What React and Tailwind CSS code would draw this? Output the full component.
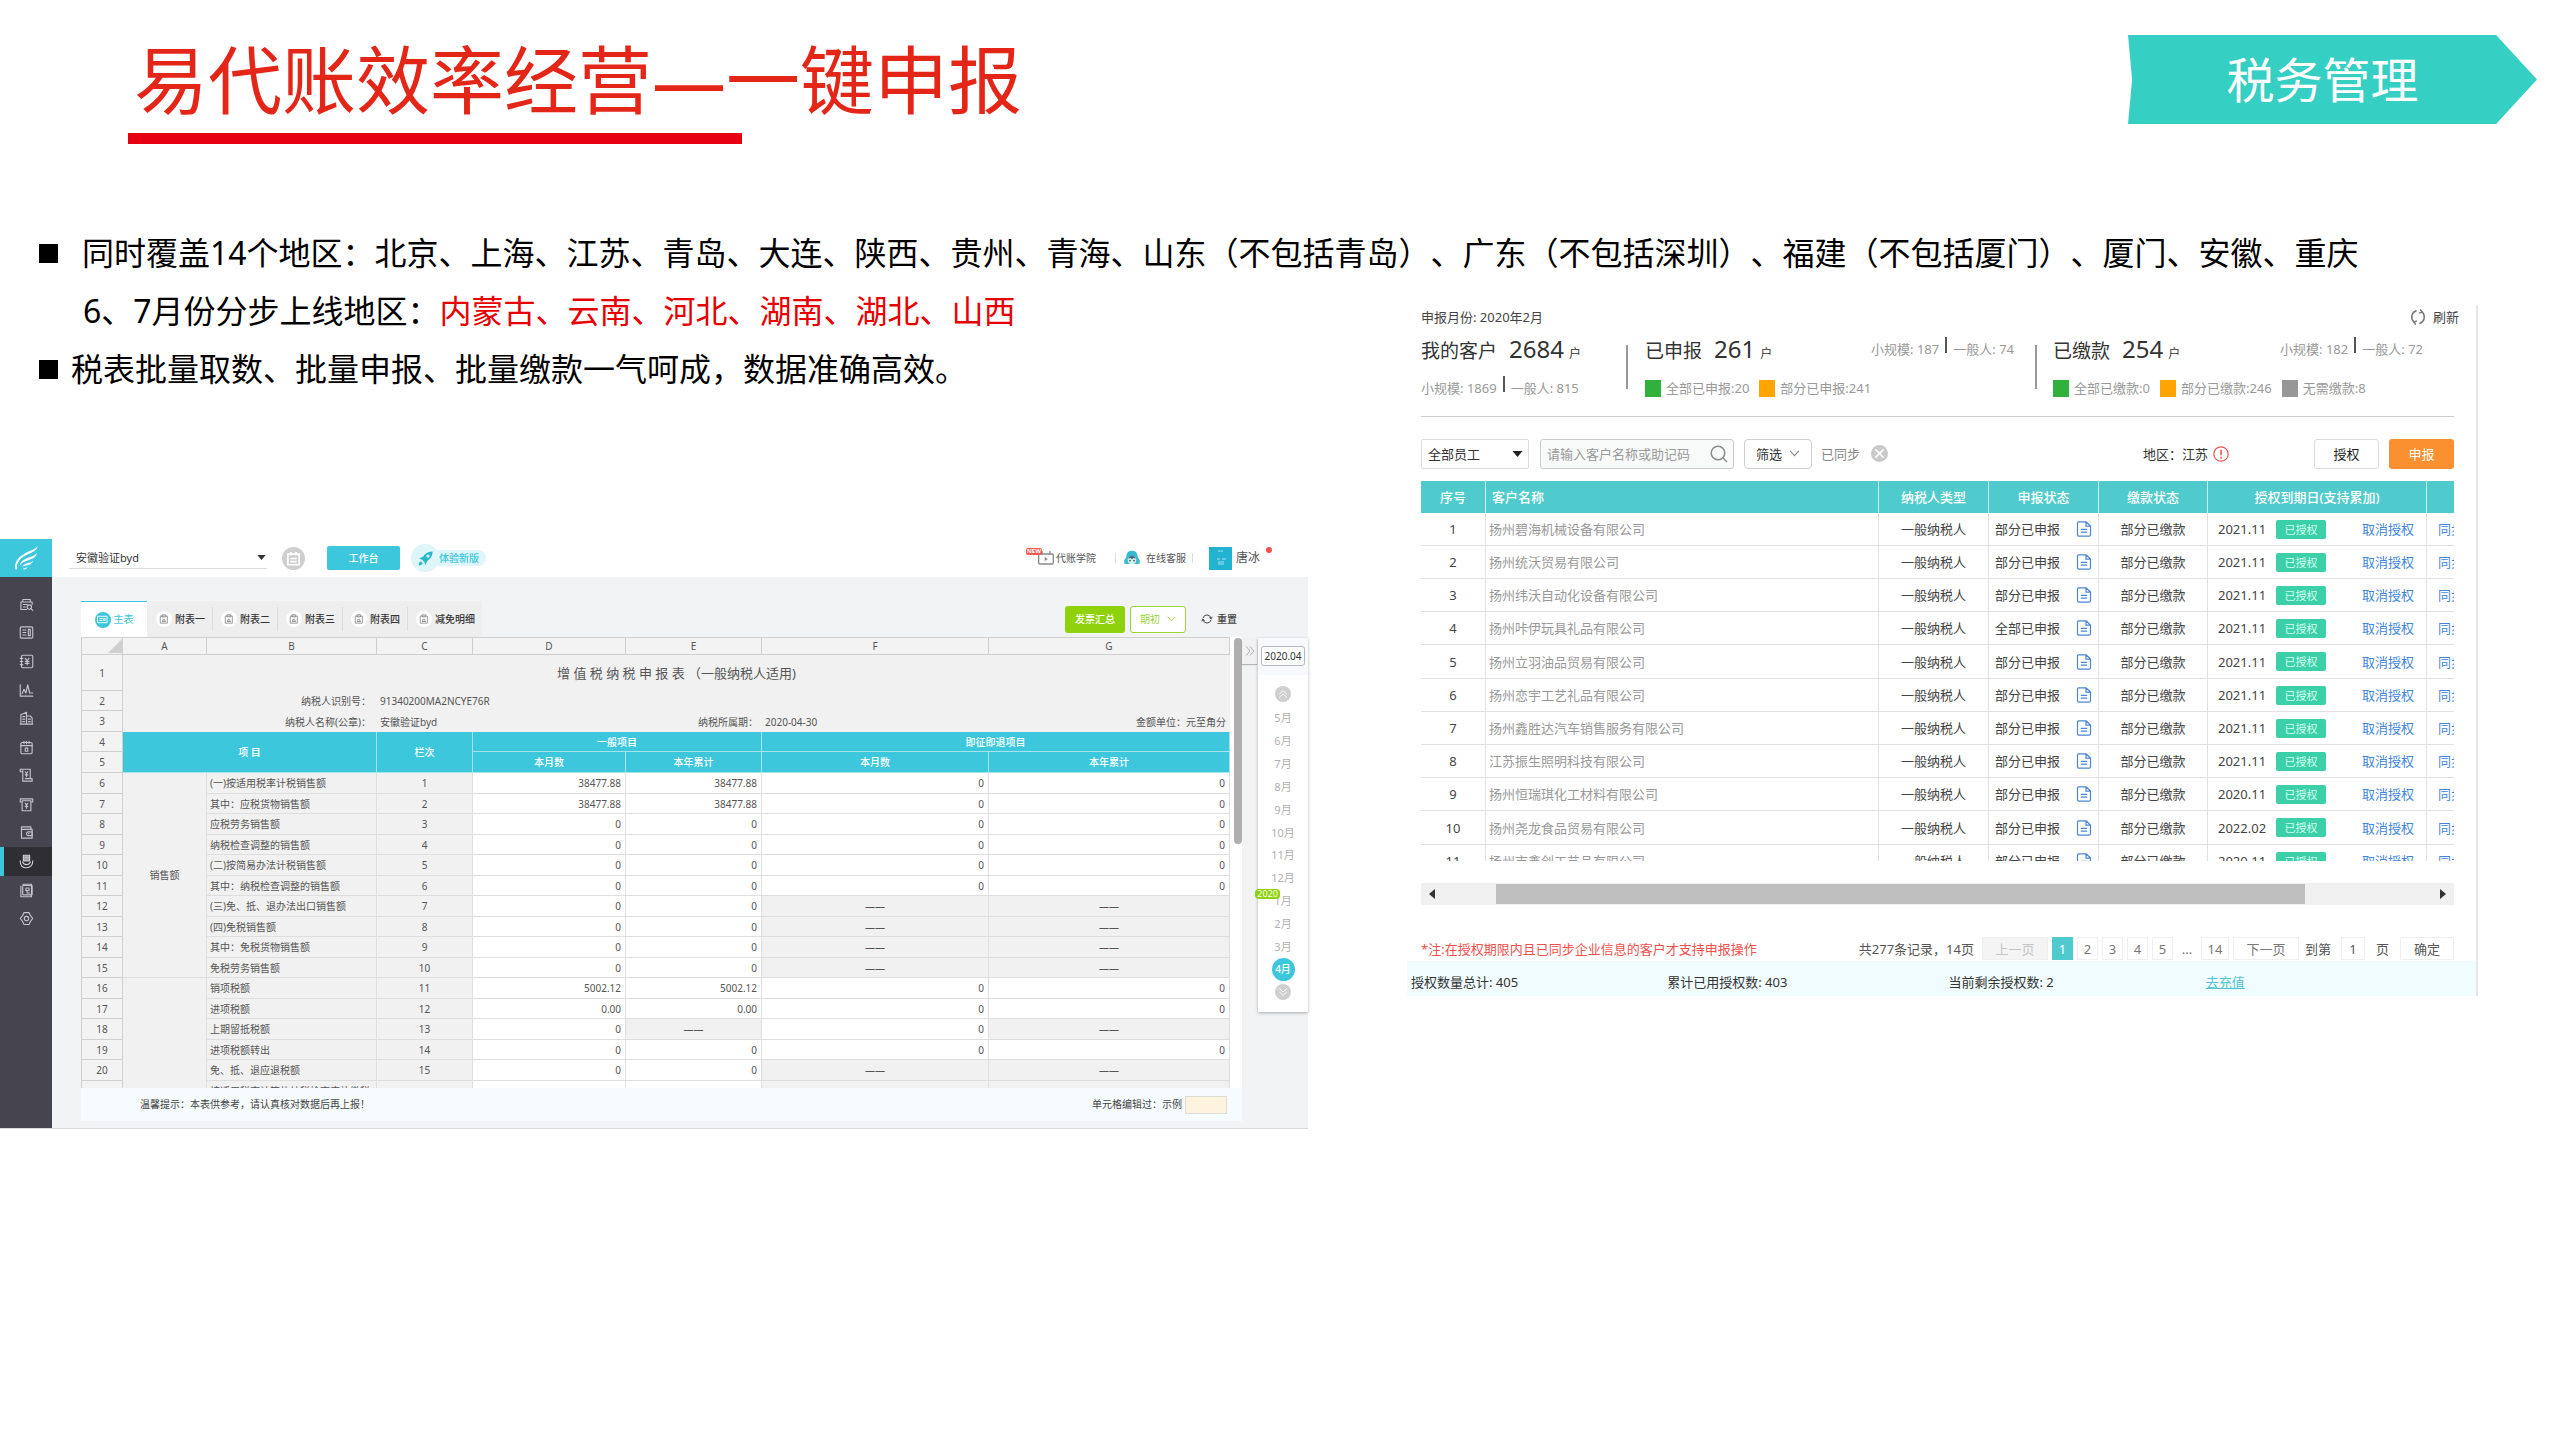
import React from "react";

const FONT = "font-['Noto_Sans','Noto_Sans_CJK_SC',sans-serif] [text-spacing-trim:space-all]";

/* ---------- small drawings ---------- */

function Line({ children, className = "size-[15px]", width = 1.6 }) {
  return (
    <svg
      viewBox="0 0 24 24"
      className={className}
      fill="none"
      stroke="currentColor"
      strokeWidth={width}
      strokeLinecap="round"
      strokeLinejoin="round"
      aria-hidden="true"
    >
      {children}
    </svg>
  );
}

const Caret = ({ className }) => (
  <svg viewBox="0 0 10 6" className={className} aria-hidden="true">
    <path d="M0 0h10L5 6z" fill="currentColor" />
  </svg>
);

const Chevron = ({ className }) => (
  <svg viewBox="0 0 12 8" className={className} fill="none" stroke="currentColor" strokeWidth="1.2" aria-hidden="true">
    <path d="M1 1l5 5.5L11 1" />
  </svg>
);

const Refresh = ({ className }) => (
  <Line className={className} width={2}>
    <path d="M9.5 3.6a9 9 0 0 0-3 15M14.5 20.4a9 9 0 0 0 3-15" />
    <path d="M8.5 21.5l-2-3 3.4-1M15.5 2.5l2 3-3.4 1" />
  </Line>
);

const Cycle = ({ className }) => (
  <Line className={className} width={2}>
    <path d="M4 9.5A8.5 8.5 0 0 1 20 9.5M20 14.5a8.5 8.5 0 0 1-16 0" />
    <path d="M17.2 9.3l3.2 2.4 1.6-3.6M6.8 14.7l-3.2-2.4L2 15.9" />
  </Line>
);

const Feather = () => (
  <svg viewBox="0 0 24 24" className="size-[26px] text-white" fill="currentColor" aria-hidden="true">
    <path d="M23 .5C21 4.5 15.5 5 10.5 8 4.5 11.5.8 16 2.3 22.5l1.5-.2C2.8 16.5 6.2 12.6 11.5 9.7 17 6.8 22 6 23 .5z" />
    <path d="M22.2 7c-1.4 3-5.2 3.600-9 5-4 1.500-6.600 3.800-7.200 7.400 1.800-3 4.500-4.300 8-5.300 4-1.200 7.600-2.700 8.200-7.100z" />
    <path d="M18.500 14.500c-1.600 1.700-3.700 1.900-6 2.600-1.900.6-3.200 1.500-3.900 3.100 1.500-.9 2.900-1.200 4.700-1.600 2.500-.5 4.600-1.600 5.200-4.100z" />
    <path d="M13.500 20c-1 .9-2.200 1.200-4.200 1.800l.3.900c2-.2 3.500-.9 3.900-2.700z" />
  </svg>
);

const Clipboard = ({ className = "size-[10px]" }) => (
  <Line className={className} width={2}>
    <path d="M4 5h16v17H4zM8 2h8v5H8zM8 18h8M10 13h4v5h-4z" />
  </Line>
);

const Calendar = () => (
  <svg viewBox="0 0 24 24" className="size-[15px]" fill="none" stroke="currentColor" strokeWidth="2.6" aria-hidden="true">
    <path d="M3 5h18v17H3zM8 1.5V7M16 1.5V7M7 12h10M7 17h10" />
  </svg>
);

const Rocket = () => (
  <svg viewBox="0 0 24 24" className="size-[17px] text-[#27b8cf]" fill="currentColor" aria-hidden="true">
    <path
      fillRule="evenodd"
      d="M22 2c-5.500 0-10 2.300-13.200 7.200L3 12.500l3.800.9 3.800 3.800.9 4.300 3.200-6.300C19.700 12 22 7.500 22 2zm-6.500 4.300a2.300 2.300 0 1 1 0 4.600 2.300 2.300 0 0 1 0-4.600z"
    />
    <path d="M6 16c-2.500.8-3.300 3-3.700 6 3-.4 5.200-1.200 6-3.700l-1.600-.4z" />
  </svg>
);

const Television = () => (
  <Line className="size-4 text-[#8a8a8a]" width={2}>
    <rect x="1" y="6" width="22" height="15" rx="2" />
    <path d="M6 2v4M18 2v4" />
    <path d="M10 10.500v6l5-3z" fill="currentColor" stroke="none" />
  </Line>
);

const Mascot = () => (
  <svg viewBox="0 0 24 24" className="size-4" aria-hidden="true">
    <path d="M12 1C6 1 3.500 5 3.500 10.500L.5 15v5c0 1 3 1.500 5 1h13c2 .5 5 0 5-1v-5l-3-4.500C20.500 5 18 1 12 1z" fill="#37b9cd" />
    <path d="M12 9c-4 0-6.500 2-6.500 6s2.500 6.500 6.500 6.500 6.500-2.500 6.500-6.500S16 9 12 9z" fill="#d9eef2" />
    <path d="M6 13c1-3 3.500-4.500 6-4.500S17 10 18 13l-3.500-1-2.500 2-2.500-2z" fill="#4d6a78" />
    <circle cx="9" cy="16" r="1.2" fill="#31424c" />
    <circle cx="15" cy="16" r="1.2" fill="#31424c" />
  </svg>
);

const Double = ({ className, d }) => (
  <svg viewBox="0 0 16 16" className={className} fill="none" stroke="currentColor" strokeWidth="1.3" aria-hidden="true">
    <path d={d} />
  </svg>
);

const Doc = () => (
  <svg viewBox="0 0 16 16" className="size-[16px] text-[#4a86d8]" fill="none" stroke="currentColor" strokeWidth="1.2" aria-hidden="true">
    <path d="M2.500.8h7.700l4.300 4.200v8.700c0 1-.6 1.500-1.500 1.500H2.800c-.9 0-1.300-.5-1.300-1.400V2c0-.8.3-1.200 1-1.200zM10 .8v4.400h4.500M4.800 8.300h6.400M4.800 11.200h6.400" />
  </svg>
);

/* ---------- left: tax return sheet ---------- */

const NAV = [
  ["查账", <><path d="M3 8v12h9M3 8h18v4M6 8V4h12v4M7 12h6M7 16h3" /><circle cx="16.5" cy="16" r="3.5" /><path d="M19 18.500l3 3" /></>],
  ["凭证", <><rect x="2" y="3" width="20" height="18" rx="2" /><path d="M6 8h5M6 12h5M6 16h5M15 7h3v10h-3z" /></>],
  ["账簿", <><rect x="4" y="2" width="18" height="20" rx="2" /><path d="M2 7h4M2 12h4M2 17h4M10 7l3 4 3-4M13 11v6M10 12h6M10 15h6" /></>],
  ["报表", <><path d="M2 3v18h20" /><path d="M5 17l3-7 3 6 3-13 3 13h5" /></>],
  ["资产", <><path d="M3 21V6l9-4v19M12 8h6l3 3v10M2 21h20M6 9h3M6 13h3M6 17h3M15 13h3M15 17h3" /></>],
  ["结账", <><rect x="3" y="4" width="18" height="18" rx="2" /><path d="M3 9h18M8 2v4M12 2v4M16 2v4M10 13h4v5h-4z" /></>],
  ["票据", <><path d="M6 6v15h15v-4H10M6 6H2V2h16v15M6 6V4M10 6l2 3 2-3M12 9v5M10 11h4" /></>],
  ["工资", <><path d="M2 3h20v5h-3v14H5V8H2zM5 8V6h14v2M10 10l2 3 2-3M12 13v5M10 15h4" /></>],
  ["资金", <><path d="M4 3h15v4M4 3v18h17V7H4" /><path d="M21 11h-6a3 3 0 0 0 0 6h6zM15 14h1" /></>],
  ["税务", <><path d="M2 11c0 7 4 11 10 11s10-4 10-11M6 13c1 3 3 4 6 4s5-1 6-4" /><path d="M7 2h10v9H7zM9 5h6M9 8h6" fill="currentColor" fillOpacity=".5" /></>],
  ["档案", <><path d="M6 2h14v16M3 5v17h17v-4" /><rect x="6" y="4" width="15" height="15" rx="1" /><path d="M11 8h5v4h-5zM13 12v4h4" /></>],
  ["设置", <><path d="M8 2.500h8l2 4.500 4 5-4 5-2 4.500H8L6 17l-4-5 4-5z" /><circle cx="12" cy="12" r="3.5" /></>],
];

function Sidebar() {
  return (
    <nav aria-label="功能" className="flex w-[52px] shrink-0 flex-col bg-[#46454f]">
      <a href="#home" aria-label="首页" className="flex h-[38px] items-center justify-center bg-[#3cc7dc]">
        <Feather />
      </a>
      <div className="mt-[13px] grid h-[343px] grid-rows-12">
        {NAV.map(([name, icon]) => (
          <button
            key={name}
            aria-label={name}
            className={
              name === "税务"
                ? "flex items-center justify-center border-l-4 border-[#3cc7dc] bg-[#2f2e33] pr-1 text-[#d0d0d6]"
                : "flex items-center justify-center text-[#c4c4ca]"
            }
          >
            <Line width={1.8}>{icon}</Line>
          </button>
        ))}
      </div>
    </nav>
  );
}

function TopBar() {
  return (
    <header className="flex h-[38px] items-center bg-white text-[10px] leading-4 text-[#555]">
      <div className="relative ml-[17px] flex items-center border-b border-[#ddd]">
        <select
          aria-label="公司"
          className="h-5 w-[198px] appearance-none bg-transparent pl-[7px] text-[11px] text-[#333] outline-none"
        >
          <option>安徽验证byd</option>
        </select>
        <Caret className="pointer-events-none absolute right-px h-[5px] w-[9px] text-[#333]" />
      </div>
      <button aria-label="日程" className="ml-[15px] flex size-[23px] items-center justify-center rounded-full bg-[#cfcfcf] text-white">
        <Calendar />
      </button>
      <button className="ml-[22px] h-6 w-[73px] rounded-[2px] bg-[#3cc7dc] font-medium text-white">工作台</button>
      <button className="ml-[11px] flex items-center font-medium text-[#3cc7dc]">
        <span className="z-10 flex size-7 items-center justify-center rounded-full bg-[#def5f9]">
          <Rocket />
        </span>
        <span className="-ml-2 rounded-r-full bg-[#def5f9] pr-[7px] pl-[8px]">体验新版</span>
      </button>
      <div className="ml-auto flex items-center pr-12">
        <a href="#school" className="relative flex items-center gap-[2px]">
          <span className="absolute -top-0.5 -left-3 z-10 rounded-[2px] bg-[#f25a52] px-px text-[6px] leading-[7px] font-bold text-white">
            NEW
          </span>
          <Television />
          代账学院
        </a>
        <span className="ml-[19px] h-[10px] w-px bg-[#ddd]" />
        <a href="#service" className="ml-2 flex items-center gap-[6px]">
          <Mascot />
          在线客服
        </a>
        <span className="ml-[6px] h-[10px] w-px bg-[#ddd]" />
        <a href="#me" className="relative ml-4 flex items-center gap-1 text-[12px]">
          <svg viewBox="0 0 23 23" className="size-[23px]" aria-hidden="true">
            <rect width="23" height="23" fill="#22b3d0" />
            <path d="M9 4h5M8 12h3M13 12h4M9 15h6M9 17h6" stroke="#a6e2ee" strokeWidth="1.2" />
          </svg>
          唐冰
          <span className="absolute top-0 -right-3 size-[6px] rounded-full bg-[#f5504a]" />
        </a>
      </div>
    </header>
  );
}

const TABS = ["附表一", "附表二", "附表三", "附表四", "减免明细"];

function SheetTools() {
  return (
    <div className="flex h-9 items-center justify-between pr-[5px] text-[10px]">
      <div role="tablist" className="flex h-9 bg-[#eeeeef]">
        <button
          role="tab"
          aria-selected="true"
          className="flex w-[66px] items-center justify-center gap-[3px] border-t border-[#3cc7dc] bg-white text-[#3cc7dc]"
        >
          <span className="flex size-4 items-center justify-center rounded-full bg-[#3cc7dc] text-white">
            <Line className="size-[11px]" width={2}>
              <path d="M2 5h20v14H2zM6 10h5M6 14h5M15 10h3v4h-3z" />
            </Line>
          </span>
          主表
        </button>
        {TABS.map((t, i) => (
          <button key={t} role="tab" aria-selected="false" className="flex items-center font-medium text-[#333]">
            <span className={i ? "h-6 w-px bg-[#dcdcdc]" : "h-6 w-px"} />
            <span className="ml-[8px] flex size-4 items-center justify-center rounded-full bg-white text-[#8a8a8a]">
              <Clipboard />
            </span>
            <span className="mr-[7px] ml-[3px]">{t}</span>
          </button>
        ))}
      </div>
      <div className="flex items-center">
        <button className="h-[27px] w-[60px] rounded-[3px] bg-[#8fd10a] font-medium text-white">发票汇总</button>
        <button className="ml-[5px] flex h-[27px] w-14 items-center justify-center gap-[7px] rounded-[3px] border border-[#9bd536] bg-white text-[#9bd536]">
          期初
          <Chevron className="h-[6px] w-[9px]" />
        </button>
        <button className="ml-[15px] flex items-center gap-1 font-medium text-[#444]">
          <Cycle className="size-3" />
          重置
        </button>
      </div>
    </div>
  );
}

const DASH = "——";
const SHEET = [
  ["(一)按适用税率计税销售额", "38477.88", "38477.88", "0", "0"],
  ["其中：应税货物销售额", "38477.88", "38477.88", "0", "0"],
  ["应税劳务销售额", "0", "0", "0", "0"],
  ["纳税检查调整的销售额", "0", "0", "0", "0"],
  ["(二)按简易办法计税销售额", "0", "0", "0", "0"],
  ["其中：纳税检查调整的销售额", "0", "0", "0", "0"],
  ["(三)免、抵、退办法出口销售额", "0", "0", DASH, DASH],
  ["(四)免税销售额", "0", "0", DASH, DASH],
  ["其中：免税货物销售额", "0", "0", DASH, DASH],
  ["免税劳务销售额", "0", "0", DASH, DASH],
  ["销项税额", "5002.12", "5002.12", "0", "0"],
  ["进项税额", "0.00", "0.00", "0", "0"],
  ["上期留抵税额", "0", DASH, "0", DASH],
  ["进项税额转出", "0", "0", "0", "0"],
  ["免、抵、退应退税额", "0", "0", DASH, DASH],
  ["按适用税率计算的纳税检查应补缴税", "", "", " ", " "],
];

const IDX = "border-r border-b border-[#cfcfcf] bg-[#f3f3f3] text-center font-normal";
const HEAD = "border-r border-b border-[#a5e3ed] bg-[#3cc7dc] text-center font-medium text-white";
const CELL = "border-r border-b border-[#dedede]";

function Sheet() {
  return (
    <table className="w-full table-fixed border-separate border-spacing-0 border-t border-l border-[#cfcfcf] bg-[#f1f1f1] text-[10px] leading-4 text-[#555]">
      <colgroup>
        <col className="w-[41px]" />
        <col className="w-[84px]" />
        <col className="w-[170px]" />
        <col className="w-[96px]" />
        <col className="w-[153px]" />
        <col className="w-[136px]" />
        <col className="w-[227px]" />
        <col className="w-[241px]" />
      </colgroup>
      <thead>
        <tr className="h-[17px]">
          <th className={IDX}>
            <svg viewBox="0 0 14 14" className="ml-auto size-[14px]" aria-hidden="true">
              <path d="M14 0v14H0z" fill="#cfcfcf" />
            </svg>
          </th>
          {["A", "B", "C", "D", "E", "F", "G"].map((c) => (
            <th key={c} className={IDX}>{c}</th>
          ))}
        </tr>
      </thead>
      <tbody>
        <tr className="h-9">
          <th className={IDX}>1</th>
          <td colSpan={7} className="text-center text-[13px]">
            增 值 税 纳 税 申 报 表 （一般纳税人适用)
          </td>
        </tr>
        <tr className="h-[20px]">
          <th className={IDX}>2</th>
          <td colSpan={2} className="pr-[6px] text-right">纳税人识别号：</td>
          <td colSpan={5} className="pl-[3px]">91340200MA2NCYE76R</td>
        </tr>
        <tr className="h-[21px]">
          <th className={IDX}>3</th>
          <td colSpan={2} className="pr-[6px] text-right">纳税人名称(公章)：</td>
          <td colSpan={2} className="pl-[3px]">安徽验证byd</td>
          <td className="pr-[4px] text-right">纳税所属期：</td>
          <td className="pl-[3px]">2020-04-30</td>
          <td className="pr-1 text-right">金额单位：元至角分</td>
        </tr>
        <tr className="h-[20px]">
          <th className={IDX}>4</th>
          <th colSpan={2} rowSpan={2} className={HEAD}>项 目</th>
          <th rowSpan={2} className={HEAD}>栏次</th>
          <th colSpan={2} className={HEAD}>一般项目</th>
          <th colSpan={2} className={HEAD}>即征即退项目</th>
        </tr>
        <tr className="h-[21px]">
          <th className={IDX}>5</th>
          <th className={HEAD}>本月数</th>
          <th className={HEAD}>本年累计</th>
          <th className={HEAD}>本月数</th>
          <th className={HEAD}>本年累计</th>
        </tr>
        {SHEET.map(([label, ...values], i) => (
          <tr key={label} className="h-[20px] even:h-[21px]">
            <th className={IDX}>{i < 15 ? i + 6 : ""}</th>
            {i === 0 && <td rowSpan={10} className={`${CELL} text-center`}>销售额</td>}
            {i === 10 && <td rowSpan={6} className={CELL} />}
            <td className={`${CELL} pl-[3px] whitespace-nowrap`}>{label}</td>
            <td className={`${CELL} text-center`}>{i < 15 ? i + 1 : ""}</td>
            {values.map((v, k) => (
              <td
                key={k}
                className={
                  v === DASH || v === " "
                    ? `${CELL} text-center`
                    : `${CELL} bg-white pr-[4px] text-right`
                }
              >
                {v}
              </td>
            ))}
          </tr>
        ))}
      </tbody>
    </table>
  );
}

const MONTHS = ["5月", "6月", "7月", "8月", "9月", "10月", "11月", "12月", "1月", "2月", "3月", "4月"];

function MonthRail() {
  return (
    <aside className="mt-[37px] w-[50px] shrink-0 self-start bg-white pb-3 text-center text-[11px] text-[#b0b0b0] shadow-[0_1px_3px_rgba(0,0,0,0.3)]">
      <div className="bg-[#f8f9fd] pt-2 pb-[9px]">
        <input
          aria-label="期间"
          defaultValue="2020.04"
          className="h-5 w-11 rounded-[3px] border border-[#b5b5bb] bg-white text-center text-[10px] text-[#333]"
        />
      </div>
      <button aria-label="上一年" className="mx-auto mt-[11px] flex size-4 items-center justify-center rounded-full bg-[#cfcfcf] text-white">
        <Double className="size-3" d="M3 8l5-4.500L13 8M3 12.500L8 8l5 4.500" />
      </button>
      <div className="mt-[5px] grid h-[274px] grid-rows-12 justify-items-center">
        {MONTHS.map((m) => (
          <div key={m} className="relative flex items-center justify-center">
            {m === "1月" && (
              <span className="absolute -top-px -left-[19px] rounded-[4px] bg-[#8fd10a] px-[2px] text-[9px] leading-[10px] text-white">
                2020
              </span>
            )}
            <button
              className={
                m === "4月"
                  ? "size-[23px] rounded-full bg-[#3cc7dc] text-[10px] font-medium text-white"
                  : "text-[11px] leading-4"
              }
            >
              {m}
            </button>
          </div>
        ))}
      </div>
      <button aria-label="下一年" className="mx-auto mt-[3px] flex size-4 items-center justify-center rounded-full bg-[#cfcfcf] text-white">
        <Double className="size-3" d="M3 3.500L8 8l5-4.500M3 8l5 4.500L13 8" />
      </button>
    </aside>
  );
}

function TaxSheetWindow() {
  return (
    <section aria-label="增值税纳税申报表" className="flex border-b border-[#d5d7da] bg-[#f2f3f5]">
      <Sidebar />
      <div className="min-w-0 flex-1">
        <TopBar />
        <div className="flex pt-6 pb-[7px] pl-[29px]">
          <div className="min-w-0 flex-1">
            <SheetTools />
            <div className="flex h-[451px] overflow-hidden bg-white">
              <div className="min-w-0 flex-1">
                <Sheet />
              </div>
              <div className="w-3 pl-1">
                <div className="mt-px h-[206px] rounded-full bg-[#b0aeae]" />
              </div>
            </div>
            <div className="flex h-[33px] items-center bg-[#f6fcfe] pr-[15px] pl-[59px] text-[10px] text-[#444]">
              <p>温馨提示：本表供参考，请认真核对数据后再上报！</p>
              <p className="ml-auto">单元格编辑过：示例</p>
              <span className="ml-[3px] h-[18px] w-[42px] border border-[#dcdcd6] bg-[#fef3df]" />
            </div>
          </div>
          <div className="w-4 pt-[37px] pr-px">
            <button
              aria-label="收起"
              className="flex h-[26px] w-full items-center justify-center bg-[#f1f1f3] text-[#aaa] shadow-[0_1px_1px_rgba(0,0,0,0.25)]"
            >
              <Double className="size-3" d="M3 2l5 6-5 6M8 2l5 6-5 6" />
            </button>
          </div>
          <MonthRail />
        </div>
      </div>
    </section>
  );
}

/* ---------- right: batch filing list ---------- */

function Split({ small, general }) {
  return (
    <span className="flex items-center text-[#999]">
      小规模: {small}
      <span className="mx-[6px] -mt-2 h-4 w-[2px] bg-[#555]" />
      一般人: {general}
    </span>
  );
}

function Headline({ name, count }) {
  return (
    <h2 className="flex items-baseline text-[19px] text-[#333]">
      {name}
      <span className="ml-3 text-[24px] leading-8">{count}</span>
      <span className="ml-[5px] text-[12px]">户</span>
    </h2>
  );
}

function Legend({ items }) {
  return (
    <ul className="flex h-8 items-center gap-[10px] text-[#999]">
      {items.map(([color, text]) => (
        <li key={text} className="flex items-center gap-[5px]">
          <span className={`h-[17px] w-4 ${color}`} />
          {text}
        </li>
      ))}
    </ul>
  );
}

function Stats() {
  return (
    <div className="mt-1 grid grid-cols-[205fr_409fr_419fr]">
      <div>
        <div className="flex h-8 items-center">
          <Headline name="我的客户" count="2684" />
        </div>
        <div className="mt-[7px] flex h-8 items-center">
          <Split small="1869" general="815" />
        </div>
      </div>
      <div className="flex gap-[17px]">
        <span className="mt-3 h-11 w-[2px] bg-[#999]" />
        <div className="flex-1">
          <div className="flex h-8 items-center justify-between pr-[21px]">
            <Headline name="已申报" count="261" />
            <Split small="187" general="74" />
          </div>
          <div className="mt-[7px]">
            <Legend items={[["bg-[#30b03c]", "全部已申报:20"], ["bg-[#ffa400]", "部分已申报:241"]]} />
          </div>
        </div>
      </div>
      <div className="flex gap-[16px]">
        <span className="mt-3 h-11 w-[2px] bg-[#999]" />
        <div className="flex-1">
          <div className="flex h-8 items-center justify-between pr-[31px]">
            <Headline name="已缴款" count="254" />
            <Split small="182" general="72" />
          </div>
          <div className="mt-[7px]">
            <Legend
              items={[
                ["bg-[#30b03c]", "全部已缴款:0"],
                ["bg-[#ffa400]", "部分已缴款:246"],
                ["bg-[#979797]", "无需缴款:8"],
              ]}
            />
          </div>
        </div>
      </div>
    </div>
  );
}

function Filters() {
  return (
    <div className="mt-5 flex h-[31px] items-center text-[#333]">
      <div className="relative flex items-center">
        <select
          aria-label="员工"
          className="h-[30px] w-[108px] appearance-none rounded-[2px] border border-[#dcdcdc] bg-white pl-[6px] outline-none"
        >
          <option>全部员工</option>
        </select>
        <Caret className="pointer-events-none absolute right-[6px] h-[6px] w-[11px] text-[#222]" />
      </div>
      <div className="relative ml-[11px] flex items-center">
        <input
          aria-label="搜索客户"
          placeholder="请输入客户名称或助记码"
          className="h-[30px] w-[194px] rounded-[3px] border border-[#c8cccc] bg-[#f8fafa] pl-[6px] outline-none placeholder:text-[#999]"
        />
        <svg viewBox="0 0 18 18" className="absolute right-[6px] size-[18px] text-[#888]" fill="none" stroke="currentColor" strokeWidth="1.5" aria-hidden="true">
          <circle cx="8" cy="8" r="6.8" />
          <path d="M13 13l4 4" />
        </svg>
      </div>
      <button className="ml-[10px] flex h-[30px] w-[68px] items-center justify-center gap-[7px] rounded-[4px] border border-[#cfcfcf]">
        筛选
        <Chevron className="h-[7px] w-[11px] text-[#888]" />
      </button>
      <span className="ml-[9px] text-[#888]">已同步</span>
      <button aria-label="清除" className="ml-[11px] flex size-[17px] items-center justify-center rounded-full bg-[#c9c9c9] text-white">
        <Line className="size-[11px]" width={3.5}>
          <path d="M4 4l16 16M20 4L4 20" />
        </Line>
      </button>
      <span className="ml-auto">地区：江苏</span>
      <svg viewBox="0 0 16 16" className="mr-[85px] ml-[5px] size-4" fill="none" stroke="#e8554e" strokeWidth="1.2" aria-hidden="true">
        <circle cx="8" cy="8" r="7.2" />
        <path d="M8 3.800v5.400M8 10.800v1.600" strokeWidth="1.6" />
      </svg>
      <button className="h-[30px] w-[65px] rounded-[3px] border border-[#dcdcdc] text-[#222]">授权</button>
      <button className="ml-[10px] h-[30px] w-[65px] rounded-[3px] bg-[#fa9030] text-white">申报</button>
    </div>
  );
}

const CLIENTS = [
  ["扬州碧海机械设备有限公司", "部分已申报", "2021.11"],
  ["扬州统沃贸易有限公司", "部分已申报", "2021.11"],
  ["扬州纬沃自动化设备有限公司", "部分已申报", "2021.11"],
  ["扬州咔伊玩具礼品有限公司", "全部已申报", "2021.11"],
  ["扬州立羽油品贸易有限公司", "部分已申报", "2021.11"],
  ["扬州恋宇工艺礼品有限公司", "部分已申报", "2021.11"],
  ["扬州鑫胜达汽车销售服务有限公司", "部分已申报", "2021.11"],
  ["江苏振生照明科技有限公司", "部分已申报", "2021.11"],
  ["扬州恒瑞琪化工材料有限公司", "部分已申报", "2020.11"],
  ["扬州尧龙食品贸易有限公司", "部分已申报", "2022.02"],
  ["扬州市鑫创工艺品有限公司", "部分已申报", "2020.11"],
];

const TH = "border-r border-[#c9eeee] font-medium";
const TD = "border-r border-b border-[#e0e0e0]";

function Clients() {
  return (
    <div className="mt-3 h-[380px] overflow-hidden">
      <table className="w-full table-fixed border-separate border-spacing-0 text-center leading-5 whitespace-nowrap text-[#444]">
        <colgroup>
          <col className="w-[65px]" />
          <col className="w-[393px]" />
          <col className="w-[110px]" />
          <col className="w-[110px]" />
          <col className="w-[109px]" />
          <col className="w-[219px]" />
          <col className="w-[27px]" />
        </colgroup>
        <thead>
          <tr className="h-8 bg-[#50cbcd] text-white">
            <th className={TH}>序号</th>
            <th className={`${TH} pl-[6px] text-left`}>客户名称</th>
            <th className={TH}>纳税人类型</th>
            <th className={TH}>申报状态</th>
            <th className={TH}>缴款状态</th>
            <th className={TH}>授权到期日(支持累加)</th>
            <th aria-label="操作" />
          </tr>
        </thead>
        <tbody>
          {CLIENTS.map(([name, state, until], i) => (
            <tr key={name} className="h-[33px] nth-[5n]:h-[34px]">
              <td className={TD}>{i + 1}</td>
              <td className={`${TD} pl-[3px] text-left text-[#999]`}>{name}</td>
              <td className={TD}>一般纳税人</td>
              <td className={TD}>
                <div className="flex items-center justify-between pr-[6px] pl-[6px]">
                  {state}
                  <button aria-label="查看申报表"><Doc /></button>
                </div>
              </td>
              <td className={TD}>部分已缴款</td>
              <td className={TD}>
                <div className="flex items-center pr-3 pl-[10px]">
                  {until}
                  <span className="ml-[10px] h-[19px] w-[50px] rounded-[2px] bg-[#3bd0a8] text-[11px] leading-5 text-[#d5fff2]">
                    已授权
                  </span>
                  <a href="#revoke" className="ml-auto text-[#3f86dc]">取消授权</a>
                </div>
              </td>
              <td className="overflow-hidden border-b border-[#e0e0e0] pl-[11px] text-left text-clip">
                <a href="#sync" className="text-[#3f86dc]">同步</a>
              </td>
            </tr>
          ))}
        </tbody>
      </table>
    </div>
  );
}

const PAGE = "h-[23px] border border-[#efefef]";

function Pager() {
  return (
    <div className="mt-[31px] flex h-[25px] items-center text-[#777]">
      <p className="text-[#f0504c]">*注:在授权期限内且已同步企业信息的客户才支持申报操作</p>
      <p className="mr-2 ml-auto text-[#555]">共277条记录，14页</p>
      <nav aria-label="分页" className="flex items-center gap-1">
        <button disabled className={`${PAGE} w-[66px] bg-[#f4f4f4] text-[#c4c4c4]`}>上一页</button>
        <button aria-current="page" className="h-[23px] w-[21px] bg-[#50cbcd] text-white">1</button>
        {["2", "3", "4", "5"].map((n) => (
          <button key={n} className={`${PAGE} w-[21px]`}>{n}</button>
        ))}
        <span className="w-5 text-center">...</span>
        <button className={`${PAGE} w-7`}>14</button>
        <button className={`${PAGE} w-[66px]`}>下一页</button>
        <label htmlFor="page" className="ml-[2px] text-[#555]">到第</label>
        <input id="page" defaultValue="1" className={`${PAGE} ml-[6px] w-6 text-center text-[#555]`} />
        <span className="ml-[7px] text-[#555]">页</span>
        <button className={`${PAGE} ml-[7px] w-[54px] text-[#555]`}>确定</button>
      </nav>
    </div>
  );
}

function FilingWindow() {
  return (
    <section
      aria-label="批量申报"
      className="mt-[23px] mr-[82px] ml-[99px] self-start border-r-2 border-[#e6e6e6] text-[13px] leading-5"
    >
      <div className="flex h-6 items-center justify-between pr-[17px] pl-[14px] text-[#444]">
        <p>申报月份: 2020年2月</p>
        <button className="flex items-center gap-[6px]">
          <Refresh className="size-[18px] text-[#777]" />
          刷新
        </button>
      </div>
      <div className="pr-[22px] pl-[14px]">
        <Stats />
        <hr className="mt-3 border-t border-[#cdcdcd]" />
        <div className="h-px" />
        <Filters />
        <Clients />
        <div className="mt-[22px] flex h-[22px] items-center bg-[#f0f0f0] px-2 text-[#333]">
          <svg viewBox="0 0 6 10" className="h-[10px] w-[6px]" aria-hidden="true">
            <path d="M6 0v10L0 5z" fill="currentColor" />
          </svg>
          <div className="mr-[135px] ml-[61px] h-5 flex-1 bg-[#bfbfbf]" />
          <svg viewBox="0 0 6 10" className="h-[10px] w-[6px]" aria-hidden="true">
            <path d="M0 0v10l6-5z" fill="currentColor" />
          </svg>
        </div>
        <Pager />
      </div>
      <footer className="grid h-[35px] grid-cols-[256fr_281fr_257fr_270fr] items-center bg-[#f0fcfe] pt-[6px] pl-1 text-[#333]">
        <span>授权数量总计: 405</span>
        <span>累计已用授权数: 403</span>
        <span>当前剩余授权数: 2</span>
        <a href="#recharge" className="text-[#50c4cf] underline">去充值</a>
      </footer>
    </section>
  );
}

/* ---------- page ---------- */

const Square = () => <span className="size-[19px] shrink-0 bg-black" />;

export default function App() {
  return (
    <main lang="zh-CN" className={`min-h-screen bg-white ${FONT}`}>
      <header className="flex items-start justify-between">
        <div className="pt-8 pl-32">
          <h1 className="pl-[6px] text-[74px] leading-[96px] text-[#e32618]">易代账效率经营—一键申报</h1>
          <div className="mt-[5px] h-[11px] w-[614px] bg-[#e60012]" />
        </div>
        <div className="mt-[35px] mr-[23px] flex h-[89px] w-[409px] items-center justify-center bg-[#35cfc3] pr-5 text-[48px] leading-none text-white [clip-path:polygon(0_0,90%_0,100%_50%,90%_100%,0_100%,1%_50%)]">
          税务管理
        </div>
      </header>

      <p className="mt-20 flex items-center gap-6 pl-[39px] text-[32px] leading-[58px] text-black">
        <Square />
        同时覆盖14个地区：北京、上海、江苏、青岛、大连、陕西、贵州、青海、山东（不包括青岛）、广东（不包括深圳）、福建（不包括厦门）、厦门、安徽、重庆
      </p>

      <div className="grid grid-cols-[1308fr_1252fr]">
        <div className="min-w-0">
          <p className="pl-[83px] text-[32px] leading-[58px] text-black">
            6、7月份分步上线地区：<span className="text-[#e60000]">内蒙古、云南、河北、湖南、湖北、山西</span>
          </p>
          <p className="flex items-center gap-[13px] pl-[39px] text-[32px] leading-[58px] text-black">
            <Square />
            税表批量取数、批量申报、批量缴款一气呵成，数据准确高效。
          </p>
          <div className="mt-[141px]">
            <TaxSheetWindow />
          </div>
        </div>
        <FilingWindow />
      </div>
    </main>
  );
}
